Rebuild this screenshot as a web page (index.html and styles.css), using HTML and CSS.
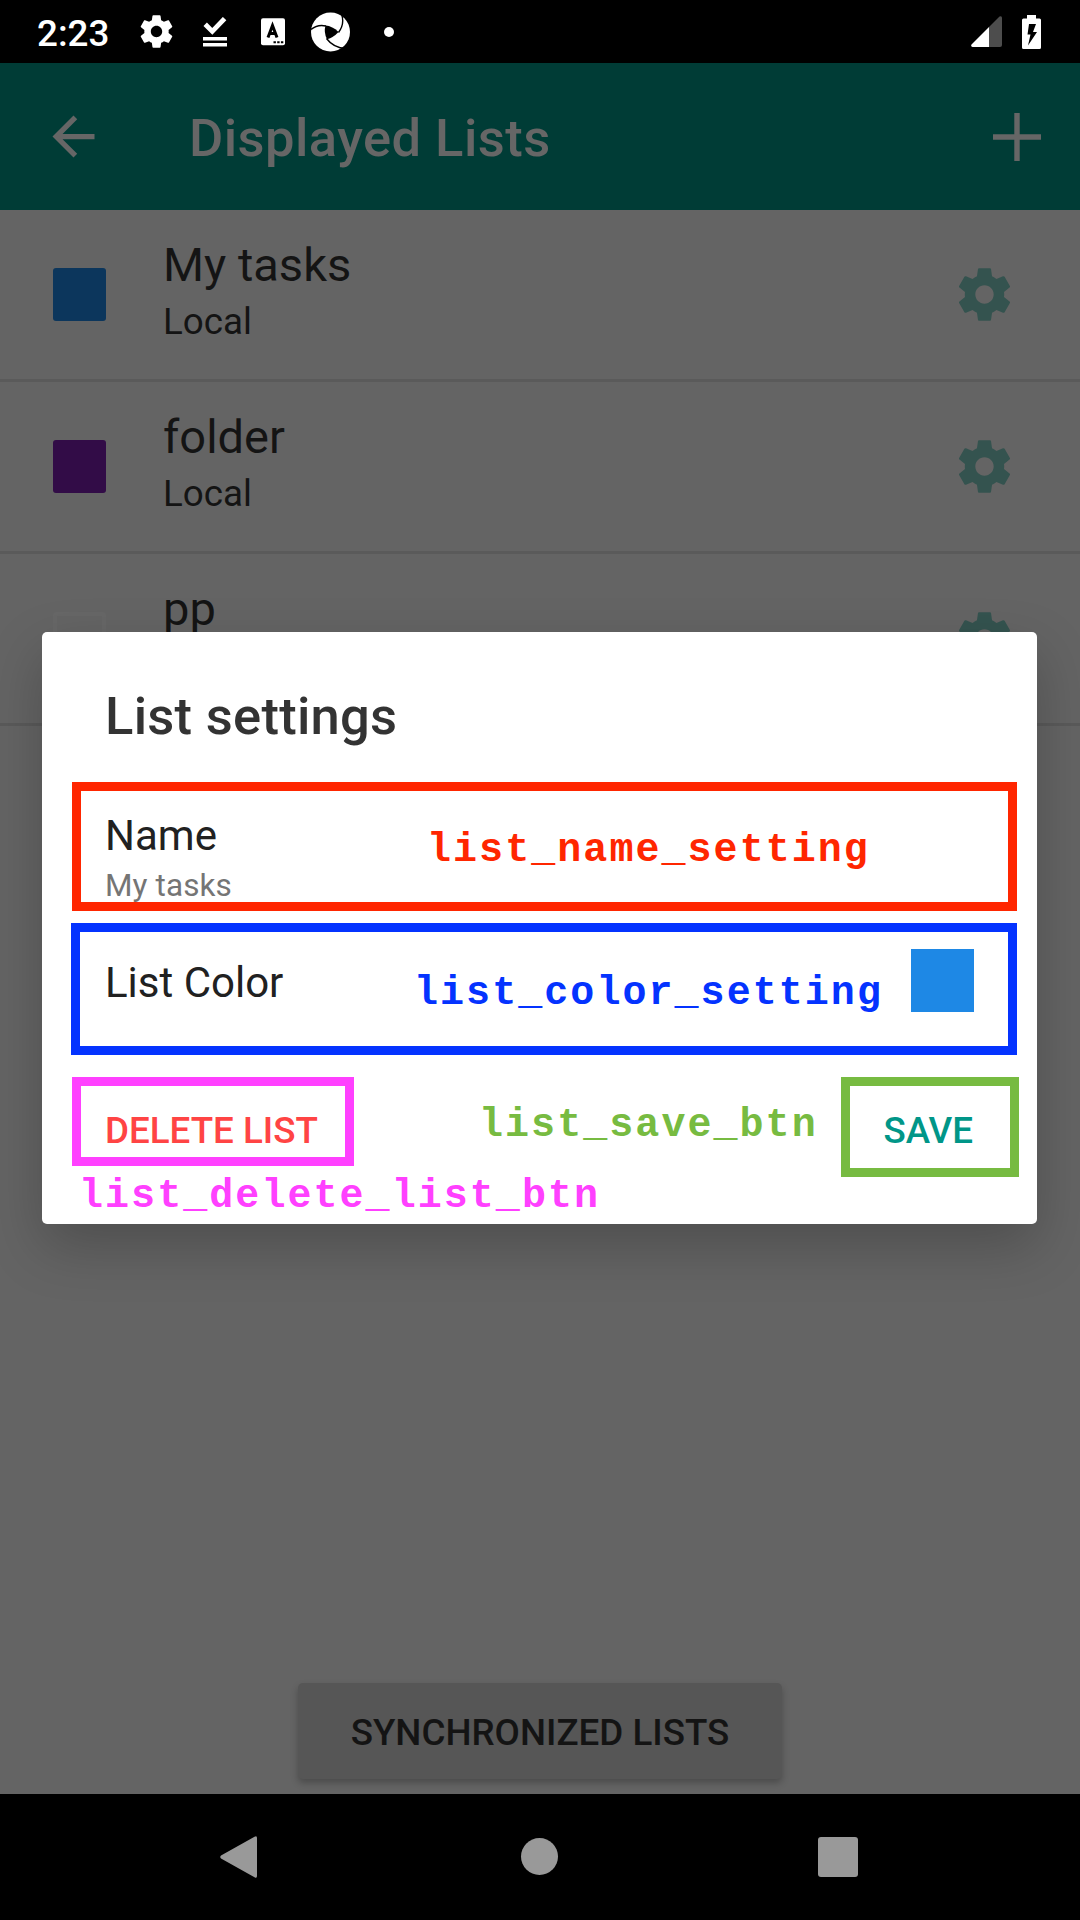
FILE: index.html
```html
<!DOCTYPE html>
<html lang="en">
<head>
<meta charset="utf-8">
<title>Displayed Lists</title>
<link rel="stylesheet" href="styles.css">
</head>
<body>
<svg width="0" height="0" class="defs">
  <symbol id="gear" viewBox="0 0 24 24"><path d="M19.43 12.98c.04-.32.07-.64.07-.98s-.03-.66-.07-.98l2.11-1.65c.19-.15.24-.42.12-.64l-2-3.46c-.12-.22-.39-.3-.61-.22l-2.49 1c-.52-.4-1.08-.73-1.69-.98l-.38-2.65C14.46 2.18 14.25 2 14 2h-4c-.25 0-.46.18-.49.42l-.38 2.65c-.61.25-1.17.59-1.69.98l-2.49-1c-.23-.09-.49 0-.61.22l-2 3.46c-.13.22-.07.49.12.64l2.11 1.65c-.04.32-.07.65-.07.98s.03.66.07.98l-2.11 1.65c-.19.15-.24.42-.12.64l2 3.46c.12.22.39.3.61.22l2.49-1c.52.4 1.08.73 1.69.98l.38 2.65c.03.24.24.42.49.42h4c.25 0 .46-.18.49-.42l.38-2.65c.61-.25 1.17-.59 1.69-.98l2.49 1c.23.09.49 0 .61-.22l2-3.46c.12-.22.07-.49-.12-.64l-2.11-1.65zM12 15.5c-1.93 0-3.5-1.57-3.5-3.5s1.57-3.5 3.5-3.5 3.5 1.57 3.5 3.5-1.57 3.5-3.5 3.5z"/></symbol>
</svg>
<div class="screen">
  <header class="status">
    <span class="clock">2:23</span>
    <svg class="s-gear"><use href="#gear"/></svg>
    <svg class="s-check" viewBox="0 0 24 30"><path d="M2.2 7.3 9.3 14.4 21.6 1.6" fill="none" stroke="#fff" stroke-width="4.8"/><path d="M0 20h24v3.6H0zM0 26h24v3.6H0z" fill="#fff"/></svg>
    <svg class="s-doc" viewBox="0 0 24 28"><rect width="24" height="27" y=".3" rx="2" fill="#fff"/><path d="M7 19.500 11.500 7.500 16 19.500M8.700 15.500h5.800" fill="none" stroke="#000" stroke-width="3"/><path d="M12.500 23.200h2.400v2h-2.400zM16.200 23.200h2.400v2h-2.400zM19.900 23.200h2.400v2h-2.400z"/></svg>
    <svg class="s-wheel" viewBox="0 0 39 40"><circle cx="19.5" cy="20" r="19.5" fill="#fff"/><path d="M14.500 13.500Q21.500 14 27.500 20Q22.500 25.500 16 27.300Q12.500 20 14.500 13.500z"/><path d="M0 17.500Q6.500 12 15 14M30.500 2Q34 12 27.500 20.500M15.500 26.500Q22.500 36 35 36.500" fill="none" stroke="#000" stroke-width="1.400"/></svg>
    <svg class="s-dot" viewBox="0 0 10 10"><circle cx="5" cy="5" r="5" fill="#fff"/></svg>
    <svg class="s-signal" viewBox="0 0 31 31"><path d="M18 11 28.500.500Q31-.500 31 2V29Q31 31 29 31H18z" fill="#4d4d4d"/><path d="M18 11V31H1.500Q-.5 30.500.5 28.500z" fill="#fff"/></svg>
    <svg class="s-battery" viewBox="0 0 19 34"><path d="M5 0h9v3.500h3.500Q19 3.500 19 5v27.500Q19 34 17.500 34h-16Q0 34 0 32.500V5Q0 3.500 1.500 3.500H5z" fill="#fff"/><path d="M7 9h7l-3 8h4L6 30.500l2.500-11H5.500z"/></svg>
  </header>
  <nav class="appbar">
    <svg class="back" viewBox="0 0 24 24"><path d="M20 11H7.830l5.590-5.590L12 4l-8 8 8 8 1.410-1.410L7.830 13H20v-2z"/></svg>
    <h1>Displayed Lists</h1>
    <svg class="plus" viewBox="0 0 48 48"><path d="M21.300 0h5.400v21.300H48v5.400H26.700V48h-5.400V26.700H0v-5.400h21.300z"/></svg>
  </nav>
  <main class="lists">
    <div class="row"><i class="swatch blue"></i><div class="label"><b>My tasks</b><span>Local</span></div><svg class="gear"><use href="#gear"/></svg></div>
    <div class="row"><i class="swatch purple"></i><div class="label"><b>folder</b><span>Local</span></div><svg class="gear"><use href="#gear"/></svg></div>
    <div class="row"><i class="swatch white"></i><div class="label"><b>pp</b><span>Local</span></div><svg class="gear"><use href="#gear"/></svg></div>
  </main>
  <footer class="foot"><div class="sync">SYNCHRONIZED LISTS</div></footer>
  <nav class="navbar">
    <svg viewBox="0 0 42 42"><path d="M37.500.8Q40-.8 40 2v38Q40 42.800 37.500 41.200L4 22.500Q2.500 21 4 19.500z"/></svg>
    <svg viewBox="0 0 42 42"><circle cx="22.5" cy="20.5" r="18.500"/></svg>
    <svg viewBox="0 0 42 42"><rect x="1" y="1" width="40" height="40" rx="3"/></svg>
  </nav>

  <section class="dialog">
    <h2>List settings</h2>
    <div class="setting name"><b>Name</b><span>My tasks</span></div>
    <div class="setting color"><b>List Color</b><i class="chip"></i></div>
    <div class="actions"><span class="delete">DELETE LIST</span><span class="save">SAVE</span></div>
  </section>

  <div class="frame f-name"></div>
  <div class="frame f-color"></div>
  <div class="frame f-delete"></div>
  <div class="frame f-save"></div>
  <code class="note n-name">list_name_setting</code>
  <code class="note n-color">list_color_setting</code>
  <code class="note n-save">list_save_btn</code>
  <code class="note n-delete">list_delete_list_btn</code>
</div>
</body>
</html>
```

FILE: styles.css
```css
* { box-sizing: border-box; }
body { margin: 0; background: #646464; font-family: Roboto, sans-serif; }
h1, h2 { margin: 0; font-weight: 500; }
b { font-weight: 400; }
svg { display: block; flex: none; }
.defs { position: absolute; }

.screen {
  position: relative;
  display: flex;
  flex-direction: column;
  width: 1080px;
  height: 1920px;
  overflow: hidden;
  background: #646464;
  color: #141414;
}

/* status bar */
.status {
  display: flex;
  align-items: center;
  height: 63px;
  padding-left: 37px;
  background: #000;
  color: #fff;
}
.clock { width: 100px; font-size: 36.75px; font-weight: 500; line-height: 43px; padding-top: 3px; }
.s-gear { width: 39px; height: 39px; fill: #fff; }
.s-check { width: 24px; height: 30px; margin-left: 27px; }
.s-doc { width: 24px; height: 28px; margin-left: 34px; }
.s-wheel { width: 39px; height: 40px; margin-left: 26px; }
.s-dot { width: 10px; height: 10px; margin-left: 34px; }
.s-signal { width: 31px; height: 31px; margin-left: auto; }
.s-battery { width: 19px; height: 34px; margin: 0 39px 0 20px; }

/* app bar */
.appbar {
  display: flex;
  align-items: center;
  height: 147px;
  padding: 0 39px 0 42px;
  background: #003c36;
  color: #666;
  fill: #666;
}
.back { width: 63px; height: 63px; }
.appbar h1 {
  flex: 1;
  margin-left: 84px;
  padding-top: 3px;
  font-size: 52.5px;
  line-height: 62px;
  letter-spacing: .45px;
}
.plus { width: 48px; height: 48px; }

/* lists */
.lists { flex: 1; }
.row {
  display: flex;
  align-items: center;
  height: 172px;
  padding: 0 64px 0 53px;
  border-bottom: 3px solid #5a5a5a;
}
.swatch { width: 53px; height: 53px; border-radius: 3px; }
.blue { background: #0c365c; }
.purple { background: #320c47; }
.white { border: 4px solid #676767; }
.label { flex: 1; margin-left: 57px; padding-bottom: 5px; }
.label b { display: block; font-size: 47px; line-height: 56px; }
.label span { display: block; padding-top: 4px; font-size: 36.75px; line-height: 50px; }
.gear { width: 63px; height: 63px; fill: #34534f; }

.foot { display: flex; justify-content: center; padding-bottom: 15px; }
.sync {
  width: 484px;
  height: 96px;
  border-radius: 5px;
  background: #565656;
  box-shadow: 0 4px 7px rgba(0, 0, 0, .25);
  font-size: 36.75px;
  font-weight: 500;
  line-height: 100px;
  text-align: center;
}

.navbar {
  display: flex;
  align-items: center;
  justify-content: space-between;
  height: 126px;
  padding: 0 221px 0 217px;
  background: #000;
  fill: #999;
}
.navbar svg { width: 42px; height: 42px; }

/* dialog */
.dialog {
  position: absolute;
  left: 42px;
  top: 632px;
  width: 995px;
  height: 592px;
  padding: 53px 63px 0;
  border-radius: 5px;
  background: #fff;
  box-shadow: 0 22px 55px rgba(0, 0, 0, .22);
  color: #212121;
}
.dialog h2 { font-size: 52.5px; line-height: 62px; letter-spacing: .28px; color: #333; }
.setting b { font-size: 42px; line-height: 50px; }
.name { height: 152px; padding-top: 64px; }
.name b, .name span { display: block; }
.name span { font-size: 31.5px; line-height: 37px; padding-top: 6px; letter-spacing: .1px; color: #757575; }
.color { display: flex; justify-content: space-between; height: 147px; padding-top: 50px; }
.color b { padding-top: 9px; }
.chip { width: 63px; height: 63px; background: #1e88e5; }
.actions {
  display: flex;
  justify-content: space-between;
  padding: 63px 1px 0 0;
  font-size: 36.75px;
  font-weight: 500;
  line-height: 43px;
}
.delete { color: #f44; }
.save { color: #009688; }

/* callouts drawn over the dialog */
.frame { position: absolute; border: 9px solid; }
.f-name { left: 72px; top: 782px; width: 945px; height: 129px; color: #ff2600; }
.f-color { left: 71px; top: 923px; width: 946px; height: 132px; color: #0433ff; }
.f-delete { left: 72px; top: 1077px; width: 282px; height: 89px; color: #ff40ff; }
.f-save { left: 841px; top: 1077px; width: 178px; height: 100px; color: #77bb41; }
.note {
  position: absolute;
  font: bold 40px/46px "Liberation Mono", monospace;
  letter-spacing: 2.05px;
  white-space: nowrap;
}
.n-name { left: 427px; top: 828px; color: #ff2600; }
.n-color { left: 414px; top: 971px; color: #0433ff; }
.n-save { left: 479px; top: 1103px; color: #77bb41; }
.n-delete { left: 79px; top: 1174px; color: #ff40ff; }
```
